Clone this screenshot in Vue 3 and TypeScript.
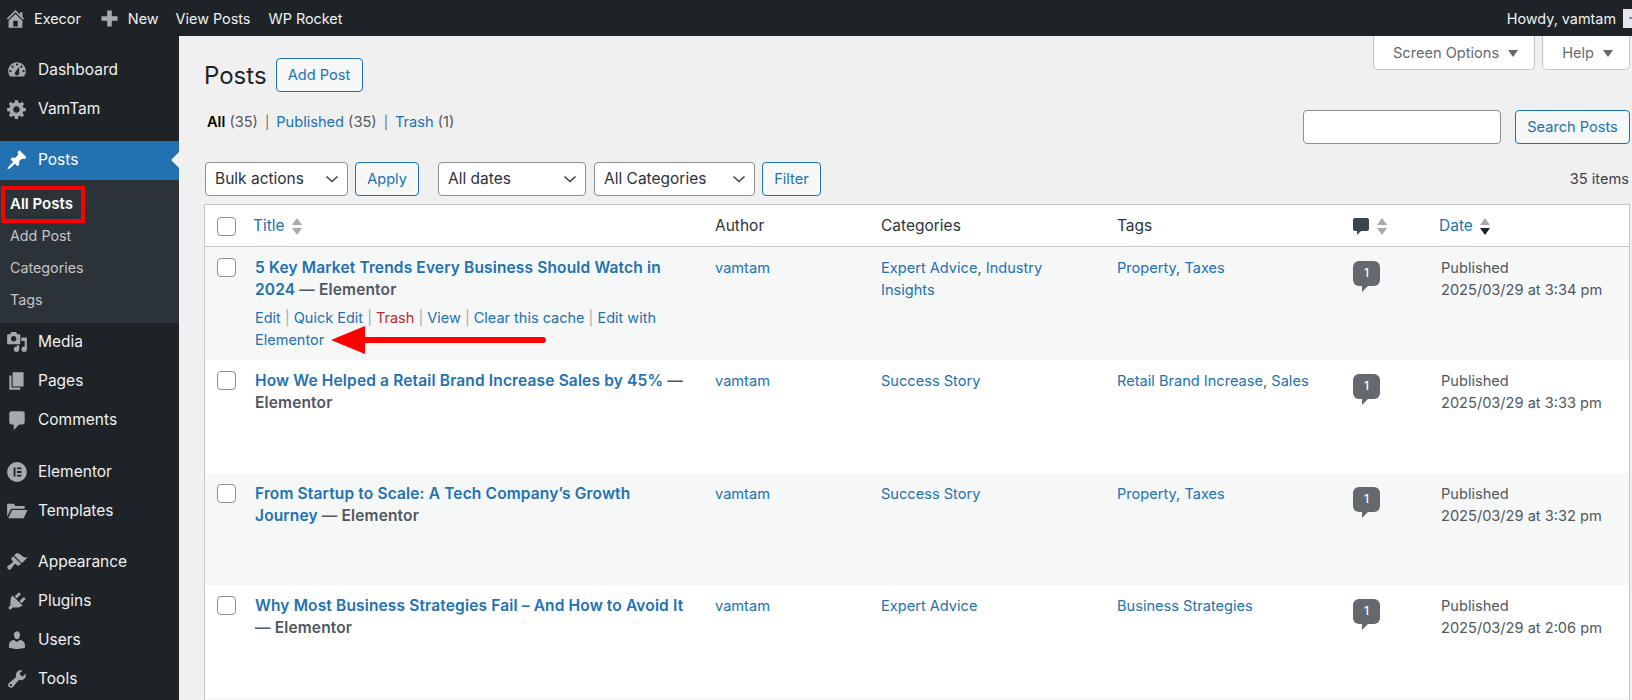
<script setup lang="ts">
interface MenuItem { label: string; icon: string; gap?: boolean; current?: boolean }
const icons: Record<string, string> = {
  dashboard: 'M3.76 16h12.48c1.1-1.37 1.76-3.11 1.76-5 0-4.42-3.58-8-8-8s-8 3.58-8 8c0 1.89.66 3.63 1.76 5zM10 4c.55 0 1 .45 1 1s-.45 1-1 1-1-.45-1-1 .45-1 1-1zM6 6c.55 0 1 .45 1 1s-.45 1-1 1-1-.45-1-1 .45-1 1-1zm8 0c.55 0 1 .45 1 1s-.45 1-1 1-1-.45-1-1 .45-1 1-1zm-5.37 5.55L12 7v6c0 1.1-.9 2-2 2s-2-.9-2-2c0-.57.24-1.08.63-1.45zM4 10c.55 0 1 .45 1 1s-.45 1-1 1-1-.45-1-1 .45-1 1-1zm12 0c.55 0 1 .45 1 1s-.45 1-1 1-1-.45-1-1 .45-1 1-1z',
  gear: 'M18 12h-2.18c-.17.7-.44 1.35-.81 1.93l1.54 1.54-2.1 2.1-1.54-1.54c-.58.36-1.23.63-1.91.79V19H8v-2.18c-.68-.16-1.33-.43-1.91-.79l-1.54 1.54-2.12-2.12 1.54-1.54c-.36-.58-.63-1.23-.79-1.91H1V9.03h2.17c.16-.7.44-1.35.8-1.94L2.43 5.55l2.1-2.1 1.54 1.54c.58-.37 1.24-.64 1.93-.81V2h3v2.18c.68.16 1.33.43 1.91.79l1.54-1.54 2.12 2.12-1.54 1.54c.36.59.64 1.24.8 1.94H18V12zm-8.5 1.5c1.66 0 3-1.34 3-3s-1.34-3-3-3-3 1.34-3 3 1.34 3 3 3z',
  pin: 'M10.44 3.02l1.82-1.82 6.36 6.35-1.83 1.82c-1.05-.68-2.48-.57-3.41.36l-.75.75c-.92.93-1.04 2.35-.35 3.41l-1.83 1.82-2.41-2.41-2.8 2.79c-.42.42-3.38 2.71-3.8 2.29s1.86-3.39 2.28-3.81l2.79-2.79L4.1 9.36l1.83-1.82c1.05.69 2.48.57 3.4-.36l.75-.75c.93-.92 1.05-2.35.36-3.41z',
  media: 'M13 11V4c0-.55-.45-1-1-1h-1.67L9 1H5L3.67 3H2c-.55 0-1 .45-1 1v7c0 .55.45 1 1 1h10c.55 0 1-.45 1-1zM7 4.5c1.38 0 2.5 1.12 2.5 2.5S8.38 9.5 7 9.5 4.5 8.38 4.5 7 5.62 4.5 7 4.5zM14 6h5v10.5c0 1.38-1.12 2.5-2.5 2.5S14 17.88 14 16.5s1.12-2.5 2.5-2.5c.17 0 .34.02.5.05V9h-3V6zm-4 8.05V13h2v3.5c0 1.38-1.12 2.5-2.5 2.5S7 17.88 7 16.5 8.12 14 9.5 14c.17 0 .34.02.5.05z',
  page: 'M6 15V2h10v13H6zm-1 1h8v2H3V5h2v11z',
  comment: 'M5 2h10c1.1 0 2 .9 2 2v8c0 1.1-.9 2-2 2h-3l-5 5v-5H5c-1.1 0-2-.9-2-2V4c0-1.1.9-2 2-2z',
  elementor: 'M10 1a9 9 0 1 0 0 18 9 9 0 0 0 0-18zM7 6h1.6v8H7zM10 6h4v1.6h-4zM10 9.2h4v1.6h-4zM10 12.4h4V14h-4z',
  folder: 'M1 4.5c0-.6.4-1 1-1h5l1.5 2H16c.6 0 1 .4 1 1V8H5.5c-.6 0-1 .3-1.3.8L1 15zM5.6 9H19.5l-3.4 7.5H2z',
  brush: 'M14.48 11.06L7.41 3.99l1.5-1.5c.5-.56 2.3-.47 3.51.32 1.21.8 1.43 1.28 2.91 2.1 1.18.64 2.45 1.26 4.45.85zm-.71.71L6.7 4.7 4.93 6.47c-.39.39-.39 1.02 0 1.41l1.06 1.06c.39.39.39 1.03 0 1.42-.6.6-3.61 2.53-4.22 3.14-.78.78-.78 2.05 0 2.83s2.05.78 2.83 0c.6-.61 2.54-3.62 3.14-4.22.39-.39 1.03-.39 1.42 0l1.06 1.06c.39.39 1.02.39 1.41 0z',
  plug: 'M13.11 4.36L9.87 7.6 8 5.73l3.24-3.24c.35-.34 1.05-.2 1.56.32.52.51.66 1.21.31 1.55zm-8 1.77l.91-1.12 9.01 9.01-1.19.84c-.71.71-2.63 1.16-3.82 1.16H6.14L4.9 17.26c-.59.59-1.54.59-2.12 0-.59-.58-.59-1.53 0-2.12l1.24-1.24v-3.88c0-1.13.4-3.19 1.09-3.89zm7.26 3.97l3.24-3.24c.34-.35 1.04-.21 1.55.31.52.51.66 1.21.31 1.55l-3.24 3.25z',
  users: 'M10 9.25c-2.27 0-2.73-3.44-2.73-3.44C7 4.02 7.82 2 9.97 2c2.16 0 2.98 2.02 2.71 3.81 0 0-.41 3.44-2.68 3.44zm0 2.57L12.72 10c2.39 0 4.52 2.33 4.52 4.53v2.49s-3.65 1.13-7.24 1.13c-3.65 0-7.24-1.13-7.24-1.13v-2.49c0-2.25 1.94-4.48 4.47-4.48z',
  tools: 'M16.68 9.77c-1.34 1.34-3.3 1.67-4.95.99l-5.41 6.52c-.99.99-2.59.99-3.58 0s-.99-2.59 0-3.57l6.52-5.42c-.68-1.65-.35-3.61.99-4.95 1.28-1.28 3.12-1.62 4.72-1.06l-2.89 2.89 2.82 2.82 2.86-2.87c.53 1.58.18 3.39-1.08 4.65zM3.81 16.21c.4.39 1.04.39 1.43 0 .4-.4.4-1.04 0-1.43-.39-.4-1.03-.4-1.43 0-.39.39-.39 1.03 0 1.43z',
  home: 'M16 8.5l1.53 1.53-1.06 1.06L10 4.62l-6.47 6.47-1.06-1.06L10 2.5l4 4v-2h2v4zm-6-2.46l6 5.99V18H4v-5.97zM12 17v-5H8v5h4z',
  plus: 'M8 3h4v5h5v4h-5v5H8v-5H3V8h5z'
}
const topMenu: MenuItem[] = [
  { label: 'Dashboard', icon: 'dashboard' },
  { label: 'VamTam', icon: 'gear' },
  { label: 'Posts', icon: 'pin', gap: true, current: true }
]
const bottomMenu: MenuItem[] = [
  { label: 'Media', icon: 'media' },
  { label: 'Pages', icon: 'page' },
  { label: 'Comments', icon: 'comment' },
  { label: 'Elementor', icon: 'elementor', gap: true },
  { label: 'Templates', icon: 'folder' },
  { label: 'Appearance', icon: 'brush', gap: true },
  { label: 'Plugins', icon: 'plug' },
  { label: 'Users', icon: 'users' },
  { label: 'Tools', icon: 'tools' }
]
const subMenu = ['All Posts', 'Add Post', 'Categories', 'Tags']
interface Row { title: string; cats: string[]; tags: string[]; date: string; actions?: boolean }
const rows: Row[] = [
  { title: '5 Key Market Trends Every Business Should Watch in 2024', cats: ['Expert Advice', 'Industry Insights'], tags: ['Property', 'Taxes'], date: '2025/03/29 at 3:34 pm', actions: true },
  { title: 'How We Helped a Retail Brand Increase Sales by 45%', cats: ['Success Story'], tags: ['Retail Brand Increase', 'Sales'], date: '2025/03/29 at 3:33 pm' },
  { title: 'From Startup to Scale: A Tech Company’s Growth Journey', cats: ['Success Story'], tags: ['Property', 'Taxes'], date: '2025/03/29 at 3:32 pm' },
  { title: 'Why Most Business Strategies Fail – And How to Avoid It', cats: ['Expert Advice'], tags: ['Business Strategies'], date: '2025/03/29 at 2:06 pm' }
]
const actions = ['Edit', 'Quick Edit', 'Trash', 'View', 'Clear this cache', 'Edit with']
</script>

<template>
  <div class="page">
    <header class="adminbar">
      <svg class="bar-icon" viewBox="0 0 20 20"><path :d="icons.home" fill-rule="evenodd" /></svg>
      <span class="bar-link site">Execor</span>
      <svg class="bar-plus" viewBox="0 0 20 20"><path :d="icons.plus" /></svg>
      <span class="bar-link new">New</span>
      <span class="bar-link view">View Posts</span>
      <span class="bar-link rocket">WP Rocket</span>
      <span class="howdy">Howdy, vamtam</span>
      <span class="avatar"><i></i></span>
    </header>
    <div class="body">
      <aside class="sidebar">
        <div v-for="m in topMenu" :key="m.label" class="menu-item" :class="{ gap: m.gap, current: m.current }">
          <svg class="menu-icon" viewBox="0 0 20 20"><path :d="icons[m.icon]" fill-rule="evenodd" /></svg>
          <span>{{ m.label }}</span>
        </div>
        <div class="submenu">
          <div v-for="(s, i) in subMenu" :key="s" class="sub-item" :class="{ active: i === 0 }">{{ s }}</div>
        </div>
        <div v-for="m in bottomMenu" :key="m.label" class="menu-item" :class="{ gap: m.gap }">
          <svg class="menu-icon" viewBox="0 0 20 20"><path :d="icons[m.icon]" fill-rule="evenodd" /></svg>
          <span>{{ m.label }}</span>
        </div>
      </aside>
      <main class="main">
        <div class="tabs">
          <div class="tab">Screen Options <i class="tri"></i></div>
          <div class="tab">Help <i class="tri"></i></div>
        </div>
        <div class="heading">
          <h1>Posts</h1>
          <span class="btn add">Add Post</span>
        </div>
        <div class="views-row">
          <div class="views">
            <b>All</b> <span class="count">(35)</span><span class="pipe">|</span><a>Published</a> <span class="count">(35)</span><span class="pipe">|</span><a>Trash</a> <span class="count">(1)</span>
          </div>
          <div class="search">
            <div class="input"></div>
            <span class="btn search-btn">Search Posts</span>
          </div>
        </div>
        <div class="toolbar">
          <div class="select w-bulk"><span>Bulk actions</span><svg viewBox="0 0 14 8"><path d="M1.5 1.5 7 6.5l5.5-5" /></svg></div>
          <span class="btn apply">Apply</span>
          <div class="select w-dates"><span>All dates</span><svg viewBox="0 0 14 8"><path d="M1.5 1.5 7 6.5l5.5-5" /></svg></div>
          <div class="select w-cats"><span>All Categories</span><svg viewBox="0 0 14 8"><path d="M1.5 1.5 7 6.5l5.5-5" /></svg></div>
          <span class="btn filter">Filter</span>
          <span class="items">35 items</span>
        </div>
        <table class="posts">
          <colgroup>
            <col class="c-check" /><col class="c-title" /><col class="c-author" /><col class="c-cats" /><col class="c-tags" /><col class="c-comm" /><col class="c-date" />
          </colgroup>
          <thead>
            <tr>
              <th class="check"><span class="box"></span></th>
              <th class="sortable"><a>Title</a><span class="sort"><i class="up"></i><i class="down"></i></span></th>
              <th>Author</th>
              <th>Categories</th>
              <th>Tags</th>
              <th class="comm-head">
                <svg class="head-bubble" viewBox="0 0 16 17"><path d="M2 0h12a2 2 0 0 1 2 2v9a2 2 0 0 1-2 2H8l-4 4v-4H2a2 2 0 0 1-2-2V2a2 2 0 0 1 2-2z" /></svg>
                <span class="sort"><i class="up"></i><i class="down"></i></span>
              </th>
              <th class="sortable"><a>Date</a><span class="sort"><i class="up"></i><i class="down dark"></i></span></th>
            </tr>
          </thead>
          <tbody>
            <tr v-for="r in rows" :key="r.title">
              <td class="check"><span class="box"></span></td>
              <td class="title">
                <strong><a>{{ r.title }}</a> — Elementor</strong>
                <div v-if="r.actions" class="row-actions">
                  <template v-for="(a, i) in actions" :key="a">
                    <span v-if="i" class="sep"> | </span><a :class="{ trash: a === 'Trash' }">{{ a }}</a>
                  </template>
                  <a> Elementor</a>
                </div>
              </td>
              <td><a>vamtam</a></td>
              <td><template v-for="(c, i) in r.cats" :key="c"><span v-if="i">, </span><a>{{ c }}</a></template></td>
              <td><template v-for="(t, i) in r.tags" :key="t"><span v-if="i">, </span><a>{{ t }}</a></template></td>
              <td class="comm"><span class="bubble">1</span></td>
              <td class="date">Published<br />{{ r.date }}</td>
            </tr>
            <tr class="next"><td colspan="7"></td></tr>
          </tbody>
        </table>
      </main>
    </div>
    <div class="redbox"></div>
    <svg class="arrow" width="216" height="30" viewBox="0 0 216 30">
      <path d="M0 15 34 1v11h178a3 3 0 0 1 0 6H34v11z" fill="#fe0000" />
    </svg>
  </div>
</template>

<style>
html, body { margin: 0; background: #f0f0f1; }
</style>

<style scoped>
.page {
  position: relative;
  width: 1632px;
  height: 700px;
  overflow: hidden;
  font-family: Inter, "Liberation Sans", sans-serif;
  font-size: 14.6px;
  line-height: 22px;
  color: #3c434a;
  background: #f0f0f1;
}
.adminbar {
  display: flex;
  align-items: center;
  box-sizing: border-box;
  height: 36px;
  padding-top: 1px;
  background: #1d2327;
  color: #f0f0f1;
  font-size: 14.4px;
}
.bar-icon { width: 23px; height: 23px; margin: -1px 0 0 4px; fill: #a7aaad; }
.bar-plus { width: 23px; height: 23px; margin: -1px 0 0 17px; fill: #a7aaad; }
.site { margin-left: 7px; }
.new { margin-left: 7px; }
.view { margin-left: 17px; }
.rocket { margin-left: 18px; }
.howdy { margin-left: auto; }
.avatar {
  position: relative;
  width: 9px;
  height: 19px;
  margin-left: 7px;
  background: #e8e8ea;
}
.avatar i { position: absolute; left: 6px; top: 8px; width: 3px; height: 2px; background: #8a7bd8; }
.body { display: flex; height: 664px; }
.sidebar {
  flex: none;
  width: 179px;
  padding-top: 14px;
  background: #1d2327;
  color: #f0f0f1;
  font-size: 15.5px;
}
.menu-item {
  position: relative;
  display: flex;
  align-items: center;
  height: 39px;
}
.menu-item.gap { margin-top: 12.5px; }
.menu-item.current { background: #2271b1; color: #fff; }
.menu-item.current::after {
  content: "";
  position: absolute;
  right: 0;
  top: 11.5px;
  border: 8px solid transparent;
  border-right-color: #f0f0f1;
  border-left-width: 0;
}
.menu-icon { flex: none; width: 22px; height: 22px; margin: 0 10px 0 6px; fill: #a7aaad; }
.current .menu-icon { fill: #fff; }
.submenu { padding: 8px 0 7px; background: #2c3338; }
.sub-item {
  height: 32px;
  padding-left: 10px;
  line-height: 32px;
  font-size: 14.3px;
  color: #c3c4c7;
}
.sub-item.active { color: #fff; font-weight: 600; font-size: 15px; }
.main { flex: 1; min-width: 0; padding: 0 2px 0 25px; }
.tabs { float: right; display: flex; gap: 7px; }
.tab {
  display: flex;
  align-items: center;
  gap: 9px;
  box-sizing: border-box;
  height: 34px;
  padding: 1px 16px 0 19px;
  background: #fff;
  border: 1px solid #c3c4c7;
  border-top: 0;
  border-radius: 0 0 5px 5px;
  color: #646970;
}
.tri { width: 0; height: 0; border: 5px solid transparent; border-top: 7px solid #646970; border-bottom: 0; }
.heading { display: flex; align-items: center; gap: 9px; padding-top: 22px; }
h1 { margin: 0; font-size: 24px; font-weight: 400; line-height: 33px; color: #1d2327; }
.btn {
  display: inline-flex;
  align-items: center;
  justify-content: center;
  box-sizing: border-box;
  height: 34px;
  border: 1px solid #2271b1;
  border-radius: 4px;
  background: #f6f7f7;
  color: #2271b1;
  font-size: 14.6px;
}
.add { width: 87px; }
.views-row { display: flex; justify-content: space-between; margin-top: 18px; }
.views { padding: 1px 0 0 3px; color: #50575e; }
.views b { color: #000; font-weight: 600; }
.views a { color: #2271b1; }
.pipe { margin: 0 7px; font-size: 13px; color: #646970; }
.search { display: flex; gap: 14px; }
.input { width: 198px; height: 34px; box-sizing: border-box; background: #fff; border: 1px solid #8c8f94; border-radius: 4px; }
.search-btn { width: 115px; }
.toolbar { display: flex; align-items: center; margin-top: 18px; padding-left: 1px; }
.select {
  display: flex;
  align-items: center;
  justify-content: space-between;
  box-sizing: border-box;
  height: 34px;
  padding: 0 8px 0 9px;
  background: #fff;
  border: 1px solid #8c8f94;
  border-radius: 4px;
  color: #2c3338;
  font-size: 15.5px;
}
.select svg { width: 14px; height: 8px; fill: none; stroke: #3c434a; stroke-width: 1.6; }
.w-bulk { width: 143px; }
.w-dates { width: 148px; margin-left: 19px; }
.w-cats { width: 161px; margin-left: 8px; }
.apply { width: 64px; margin-left: 7px; }
.filter { width: 59px; margin-left: 7px; }
.items { margin-left: auto; margin-right: 1px; color: #3c434a; }
.posts {
  width: 1426px;
  margin-top: 8px;
  table-layout: fixed;
  border-collapse: separate;
  border-spacing: 0;
  background: #fff;
  border-top: 1px solid #c3c4c7;
  border-left: 1px solid #c3c4c7;
  border-right: 1px solid #c3c4c7;
}
.c-check { width: 40px; }
.c-title { width: 460px; }
.c-author { width: 166px; }
.c-cats { width: 236px; }
.c-tags { width: 236px; }
.c-comm { width: 88px; }
th {
  height: 41px;
  padding: 0 10px;
  border-bottom: 1px solid #c3c4c7;
  font-size: 15.5px;
  font-weight: 400;
  text-align: left;
  color: #2c3338;
  white-space: nowrap;
}
th.check, td.check { padding: 0 0 0 12px; }
th.sortable { padding-left: 8px; }
th a, td a { color: #2271b1; }
.sort { display: inline-flex; flex-direction: column; gap: 3px; margin-left: 7px; vertical-align: middle; }
.sort i { display: block; width: 0; height: 0; border: 5px solid transparent; }
.sort .up { border-top: 0; border-bottom: 7px solid #a7aaad; }
.sort .down { border-bottom: 0; border-top: 7px solid #a7aaad; }
.sort .dark { border-top-color: #1d2327; }
.comm-head { padding-left: 10px; }
.head-bubble { width: 16px; height: 17px; fill: #3c434a; vertical-align: middle; }
.comm-head .sort { margin-left: 8px; }
.box {
  display: inline-block;
  box-sizing: border-box;
  width: 19px;
  height: 19px;
  vertical-align: middle;
  background: #fff;
  border: 1px solid #8c8f94;
  border-radius: 4px;
}
td {
  height: 113px;
  box-sizing: border-box;
  padding: 10px;
  vertical-align: top;
  color: #50575e;
}
td.title { padding-bottom: 0; }
tbody tr:nth-child(3) td { height: 112px; }
tbody tr:nth-child(odd) td { background: #f6f7f7; }
td.check { padding-top: 11px; }
td.check .box { vertical-align: top; }
strong { font-size: 15.5px; letter-spacing: .15px; font-weight: 600; color: #50575e; }
strong a { color: #2271b1; }
.row-actions { margin-top: 6px; font-size: 14.5px; }
.sep { font-size: 14.4px; color: #a7aaad; }
a.trash { color: #b32d2e; }
.bubble {
  position: relative;
  display: block;
  width: 27px;
  height: 25px;
  margin-top: 4px;
  border-radius: 6px;
  background: #646970;
  color: #fff;
  font-size: 12px;
  font-weight: 500;
  line-height: 24px;
  text-align: center;
}
.bubble::after {
  content: "";
  position: absolute;
  left: 9px;
  top: 25px;
  border-top: 6px solid #646970;
  border-right: 6px solid transparent;
}
td.comm { padding-left: 10px; }
td.date { padding-left: 10px; white-space: nowrap; }
.redbox {
  position: absolute;
  left: 1px;
  top: 186px;
  width: 84px;
  height: 37px;
  box-sizing: border-box;
  border: 4px solid #fe0000;
}
.arrow { position: absolute; left: 331px; top: 325px; }
</style>
